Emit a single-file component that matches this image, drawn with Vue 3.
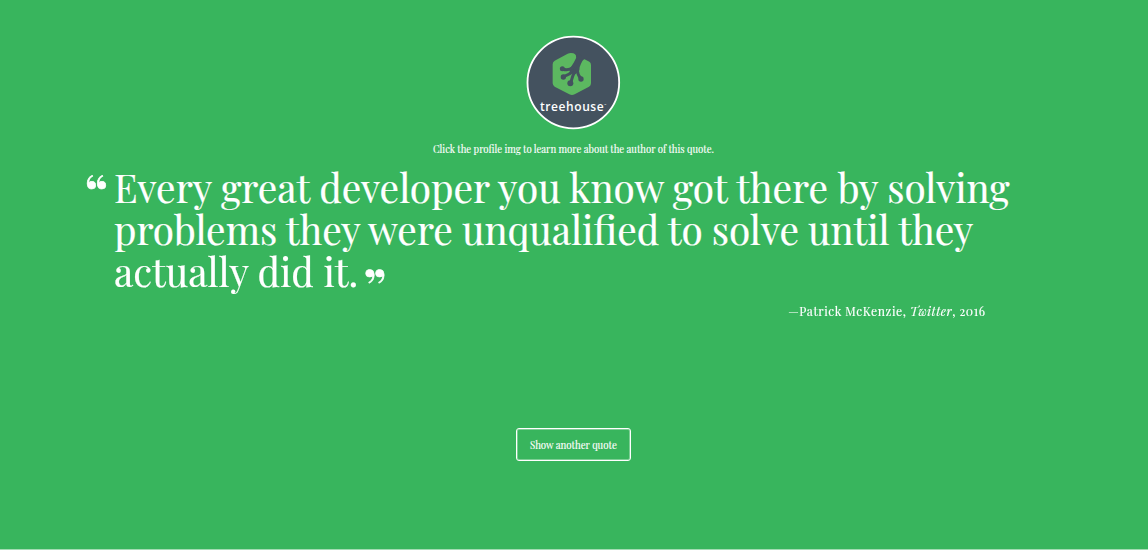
<script setup>
import { ref } from 'vue'

const quote = ref({
  lines: [
    { text: 'Every great developer you know got there by solving', cls: 'l1' },
    { text: 'problems they were unqualified to solve until they', cls: 'l2' },
    { text: 'actually did it.', cls: 'l3' }
  ],
  author: 'Patrick McKenzie',
  source: 'Twitter',
  year: '2016'
})
</script>

<template>
  <main class="page">
    <a class="profile">
      <svg viewBox="0 0 318 318" width="106" height="106">
        <circle cx="160" cy="157.5" r="137.5" fill="#44525f" stroke="#fff" stroke-width="5.5" />
        <path d="M98 103Q98 96 104 92L143 71Q151 67 160 70Q170 74 168 82L184 92Q191 85 198 90L208 95Q213 98 213 105V160Q213 167 207 170L164 193Q156 197 148 193L104 170Q98 166 98 160Z" fill="#5cb860" />
        <path d="M172 68L194 85Q188 91 183 101Q177 112 178 121L166 133Q152 130 148 123Q153 108 161 98Q170 86 172 68Z" fill="#44525f" />
        <g fill="none" stroke="#44525f" stroke-width="9" stroke-linecap="round" stroke-linejoin="round">
          <path d="M158 113Q145 123 128 117" />
          <path d="M161 122Q149 134 131 140" />
          <path d="M164 124Q157 139 152 159" />
          <path d="M171 118Q173 135 183 147" />
        </g>
        <g fill="#44525f">
          <circle cx="127" cy="116" r="7.5" />
          <circle cx="130" cy="141" r="8" />
          <circle cx="151" cy="160" r="9" />
          <circle cx="183" cy="147" r="8" />
        </g>
        <text class="brand" x="60" y="244" textLength="191" lengthAdjust="spacing">treehouse</text>
        <text class="tm" x="252" y="229">™</text>
      </svg>
    </a>
    <p class="hint">Click the profile img to learn more about the author of this quote.</p>
    <blockquote class="quote">
      <span class="mark open">“</span>
      <div class="words">
        <div v-for="l in quote.lines" :key="l.cls" class="line" :class="l.cls">
          <span>{{ l.text }}</span><span v-if="l.cls === 'l3'" class="mark close">”</span>
        </div>
      </div>
    </blockquote>
    <p class="source">—{{ quote.author }}, <em>{{ quote.source }}</em>, {{ quote.year }}</p>
    <button class="next"><span class="label">Show another quote</span></button>
  </main>
</template>

<style>
body {
  background: #38b55d;
  overflow: hidden;
}
</style>

<style scoped>
.page {
  height: 550px;
  box-sizing: border-box;
  border-bottom: 1px solid #a3dcb3;
  padding-top: 30px;
  background: #38b55d;
  color: #fff;
  font-family: "Playfair Display", "Liberation Serif", serif;
}
.profile {
  display: block;
  width: 106px;
  height: 106px;
  margin-left: 520px;
}
.profile svg {
  display: block;
}
.brand {
  font: 600 36px "Open Sans", sans-serif;
  fill: #fff;
}
.tm {
  font: 9px "Open Sans", sans-serif;
  fill: #fff;
}
.hint {
  margin: 5px 0 0 432.5px;
  width: 330px;
  font-size: 11px;
  line-height: 16px;
  white-space: nowrap;
  -webkit-text-stroke: 0.15px #fff;
  transform: scaleX(0.874);
  transform-origin: 0 50%;
}
.quote {
  display: flex;
  margin: 9px 0 0 85px;
}
.mark {
  font-size: 49px;
  font-weight: 700;
  line-height: 42px;
  -webkit-text-stroke: 0.6px #fff;
}
.open {
  width: 28.5px;
  margin-top: 4px;
}
.close {
  display: inline-block;
  height: 42px;
  margin-left: 6px;
  vertical-align: top;
  transform: translateY(14px);
}
.line {
  width: 920px;
  font-size: 39.4px;
  line-height: 42px;
  height: 42px;
  white-space: nowrap;
  -webkit-text-stroke: 0.2px #fff;
  transform: scaleX(0.981);
  transform-origin: 0 50%;
}
.l2 {
  word-spacing: -0.55px;
}
.line .mark {
  -webkit-text-stroke: 0.6px #fff;
}
.source {
  margin: 11px 162.5px 0 0;
  text-align: right;
  font-size: 13.2px;
  line-height: 16px;
  letter-spacing: 0.6px;
  -webkit-text-stroke: 0.15px #fff;
  transform: scaleX(0.918);
  transform-origin: 100% 50%;
}
.next {
  display: block;
  width: 115px;
  height: 33px;
  margin: 109px 0 0 516px;
  padding: 0;
  border: 1px solid #fff;
  border-radius: 3px;
  box-shadow: inset 0 0 0 1px rgba(255, 255, 255, 0.35);
  background: transparent;
  color: #fff;
  font-family: inherit;
  font-size: 11px;
}
.label {
  display: inline-block;
  white-space: nowrap;
  -webkit-text-stroke: 0.15px #fff;
  transform: scaleX(0.88);
}
</style>
